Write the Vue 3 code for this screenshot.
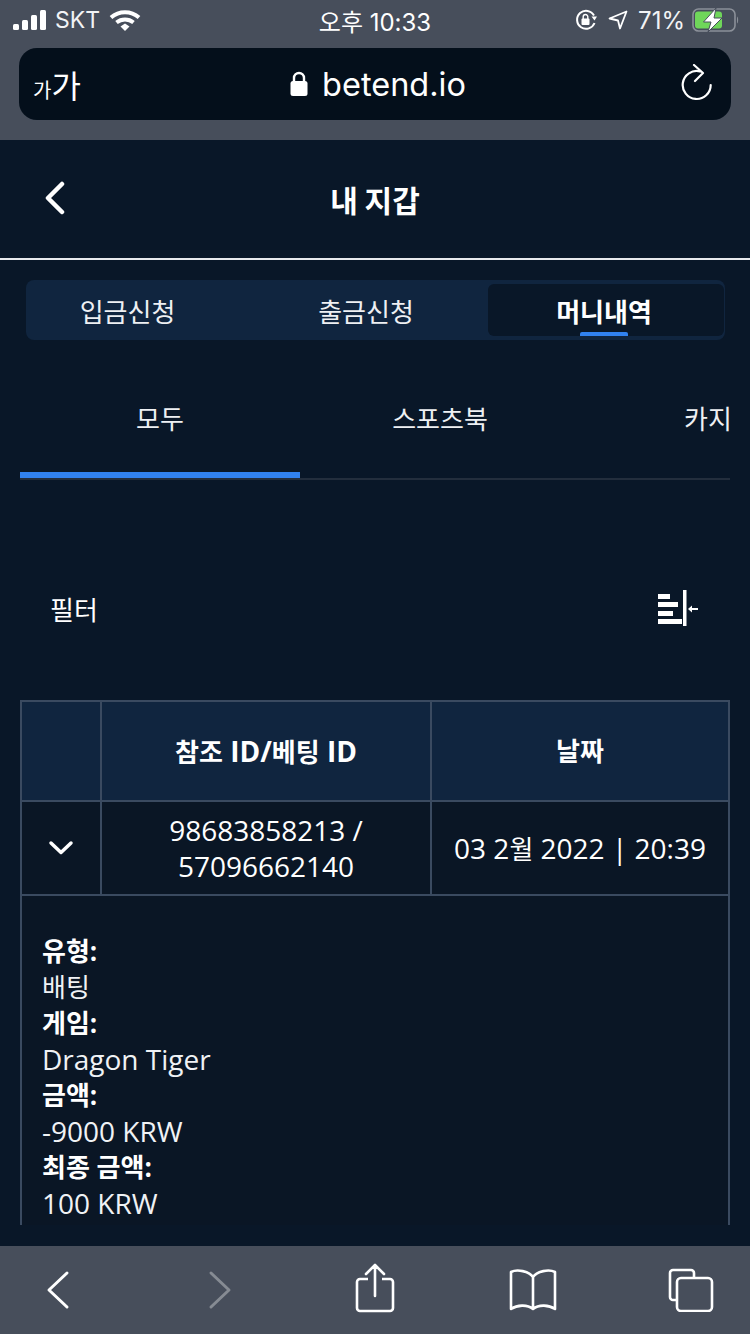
<template>
  <div class="page">
    <div class="browser-top">
      <div class="status">
        <div class="status-side">
          <svg class="signal" width="36" height="22" viewBox="0 0 36 22">
            <rect v-for="(bar, i) in signalBars" :key="i" :x="bar.x" :y="bar.y" width="6" :height="bar.h" rx="1.5" fill="#fff" />
          </svg>
          <span class="carrier">SKT</span>
          <svg class="wifi" width="32" height="24" viewBox="0 0 32 24">
            <path d="M2 9.500C10 2.500 22 2.500 30 9.500" fill="none" stroke="#fff" stroke-width="4" />
            <path d="M7.500 14.500C12.500 10.500 19.500 10.500 24.500 14.500" fill="none" stroke="#fff" stroke-width="4" />
            <path d="M11.500 18.500 16 15.500 20.500 18.500 16 23Z" fill="#fff" />
          </svg>
        </div>
        <div class="clock">오후 10:33</div>
        <div class="status-side right">
          <svg width="22" height="22" viewBox="0 0 22 22">
            <path d="M19 6.500A9 9 0 1 0 19.500 14" fill="none" stroke="#fff" stroke-width="2" />
            <path d="M16.500 7.500 22 7.500 19.500 11.500Z" fill="#fff" />
            <rect x="6.500" y="9.500" width="8" height="6.500" rx="1" fill="#fff" />
            <path d="M8.200 10V7.800a2.300 2.300 0 0 1 4.600 0V10" fill="none" stroke="#fff" stroke-width="1.400" />
          </svg>
          <svg class="arrow" width="20" height="20" viewBox="0 0 20 20">
            <path d="M18.500 1.500 1.500 8.500 10 10.500 12 18.500Z" fill="none" stroke="#fff" stroke-width="1.800" stroke-linejoin="round" />
          </svg>
          <span class="battery-text">71%</span>
          <svg class="battery" width="48" height="24" viewBox="0 0 48 24">
            <rect x="1" y="1" width="42" height="22" rx="5.500" fill="none" stroke="#8b9099" stroke-width="1.600" />
            <path d="M45 8.500c1.500.5 1.500 6.500 0 7Z" fill="#8b9099" />
            <rect x="3" y="3.500" width="27" height="17" rx="3" fill="#6fd65a" />
            <path d="M24 0 11.500 14H19L16 24 30 10H22Z" fill="#fff" stroke="#474e5b" stroke-width="1" />
          </svg>
        </div>
      </div>
      <div class="url-bar">
        <span class="aa"><small>가</small>가</span>
        <div class="address">
          <svg width="18" height="26" viewBox="0 0 18 26">
            <path d="M4 11V7a5 5 0 0 1 10 0v4" fill="none" stroke="#fff" stroke-width="2.400" />
            <rect x="0.500" y="10" width="17" height="15" rx="2.500" fill="#fff" />
          </svg>
          <span>betend.io</span>
        </div>
        <svg class="reload" width="32" height="38" viewBox="0 0 32 38">
          <path d="M19 7.400A14 14 0 1 0 29.700 21" fill="none" stroke="#fff" stroke-width="2.200" stroke-linecap="round" />
          <path d="M13 1 22 9 14 17" fill="none" stroke="#fff" stroke-width="2.200" stroke-linecap="round" stroke-linejoin="round" />
        </svg>
      </div>
    </div>

    <div class="content">
      <header class="nav">
        <svg class="nav-back" width="22" height="34" viewBox="0 0 22 34">
          <path d="M18 3 4 17 18 31" fill="none" stroke="#fff" stroke-width="4.500" stroke-linecap="round" stroke-linejoin="round" />
        </svg>
        <h1>내 지갑</h1>
      </header>

      <div class="segment">
        <div v-for="tab in walletTabs" :key="tab" class="segment-item" :class="{ active: tab === '머니내역' }">{{ tab }}</div>
      </div>

      <div class="tabs">
        <div v-for="(tab, i) in gameTabs" :key="tab" class="tab" :class="{ active: i === 0 }">{{ tab }}</div>
      </div>

      <div class="filter">
        <span>필터</span>
        <svg width="40" height="36" viewBox="0 0 40 36">
          <g fill="#fff">
            <rect x="0" y="4" width="12" height="5" />
            <rect x="0" y="12" width="20" height="5" />
            <rect x="0" y="21" width="15" height="5" />
            <rect x="0" y="29" width="24" height="5" />
            <rect x="25" y="0" width="3.500" height="36" />
            <rect x="33" y="18" width="7" height="2" />
            <path d="M30 19 34 15.500V22.500Z" />
          </g>
        </svg>
      </div>

      <div class="table">
        <div class="row head">
          <div class="cell c1"></div>
          <div class="cell c2"><span><span class="ko">참조</span> ID/<span class="ko">베팅</span> ID</span></div>
          <div class="cell c3"><span class="ko">날짜</span></div>
        </div>
        <div class="row body">
          <div class="cell c1">
            <svg width="26" height="16" viewBox="0 0 26 16">
              <path d="M3 3 13 12.500 23 3" fill="none" stroke="#fff" stroke-width="3.500" stroke-linecap="round" stroke-linejoin="round" />
            </svg>
          </div>
          <div class="cell c2">98683858213 /<br />57096662140</div>
          <div class="cell c3"><span>03 2<span class="ko">월</span> 2022 | 20:39</span></div>
        </div>
        <div class="details">
          <template v-for="item in details" :key="item.label">
            <b>{{ item.label }}</b>
            <span :class="{ ko: item.ko }">{{ item.value }}</span>
          </template>
        </div>
      </div>
    </div>

    <footer class="toolbar">
      <svg width="28" height="40" viewBox="0 0 28 40">
        <path d="M22 3 4 20 22 37" fill="none" stroke="#fff" stroke-width="3" stroke-linecap="round" stroke-linejoin="round" />
      </svg>
      <svg class="forward" width="28" height="40" viewBox="0 0 28 40">
        <path d="M6 3 24 20 6 37" fill="none" stroke="#868b93" stroke-width="3" stroke-linecap="round" stroke-linejoin="round" />
      </svg>
      <svg class="share" width="40" height="50" viewBox="0 0 40 50">
        <path d="M13 16H5a3 3 0 0 0-3 3v26a3 3 0 0 0 3 3h30a3 3 0 0 0 3-3V19a3 3 0 0 0-3-3h-8" fill="none" stroke="#fff" stroke-width="2.600" />
        <path d="M20 33V3M11 11l9-9 9 9" fill="none" stroke="#fff" stroke-width="2.600" stroke-linecap="round" stroke-linejoin="round" />
      </svg>
      <svg class="book" width="48" height="42" viewBox="0 0 48 42">
        <path d="M24 8C20 2 8 0 2 3V40C8 36 18 35 24 40C30 35 40 36 46 40V3C40 0 28 2 24 8ZM24 8V39" fill="none" stroke="#fff" stroke-width="2.600" stroke-linejoin="round" />
      </svg>
      <svg class="pages" width="46" height="44" viewBox="0 0 46 44">
        <path d="M8 32H5a3 3 0 0 1-3-3V5a3 3 0 0 1 3-3h18a3 3 0 0 1 3 3v5" fill="none" stroke="#fff" stroke-width="2.600" />
        <rect x="9" y="10" width="35" height="33" rx="4" fill="none" stroke="#fff" stroke-width="2.600" />
      </svg>
    </footer>
  </div>
</template>

<script setup>
const signalBars = [
  { x: 0, y: 15, h: 6 },
  { x: 9, y: 11, h: 10 },
  { x: 18, y: 6, h: 15 },
  { x: 27, y: 1, h: 20 },
]

const walletTabs = ['입금신청', '출금신청', '머니내역']
const gameTabs = ['모두', '스포츠북', '카지노']

const details = [
  { label: '유형:', value: '배팅', ko: true },
  { label: '게임:', value: 'Dragon Tiger' },
  { label: '금액:', value: '-9000 KRW' },
  { label: '최종 금액:', value: '100 KRW' },
]
</script>

<style scoped>
.page {
  width: 750px;
  height: 1334px;
  display: flex;
  flex-direction: column;
  overflow: hidden;
  background: #091728;
  color: #fff;
  font-family: "Open Sans", "Noto Sans CJK KR", sans-serif;
}

.browser-top {
  height: 140px;
  flex: none;
  background: #474e5b;
  padding: 0 19px;
  box-sizing: border-box;
}

.status {
  height: 40px;
  margin: 0 -6px 8px;
  display: flex;
  align-items: center;
  justify-content: space-between;
  position: relative;
  font-family: Inter, "Noto Sans CJK KR", sans-serif;
  font-size: 24px;
}

.status-side {
  display: flex;
  align-items: center;
  gap: 6px;
  color: #f2f3f5;
}

.status-side.right {
  gap: 9px;
}

.wifi {
  margin-left: 3px;
}

.carrier {
  font-size: 23px;
}

.arrow {
  margin-left: 2px;
}

.battery-text {
  margin-left: 1px;
}

.battery {
  margin-left: -2px;
  margin-right: -3px;
}

.clock {
  position: absolute;
  left: 0;
  right: 0;
  text-align: center;
  pointer-events: none;
}

.url-bar {
  height: 72px;
  border-radius: 18px;
  background: #040f1b;
  display: flex;
  align-items: center;
  justify-content: space-between;
  position: relative;
  padding: 0 18px 0 14px;
}

.aa {
  font-family: "Noto Sans CJK KR", sans-serif;
  font-size: 32px;
  line-height: 1;
}

.aa small {
  font-size: 20px;
}

.address {
  position: absolute;
  left: 6px;
  right: 0;
  display: flex;
  align-items: center;
  justify-content: center;
  gap: 14px;
  font-family: Inter, sans-serif;
  font-size: 32.5px;
  pointer-events: none;
}

.reload {
  margin-bottom: 2px;
}

.content {
  flex: 1;
  min-height: 0;
  overflow: hidden;
  display: flex;
  flex-direction: column;
}

.nav {
  height: 120px;
  flex: none;
  box-sizing: border-box;
  border-bottom: 2px solid #e8eaed;
  display: flex;
  align-items: center;
  justify-content: center;
  position: relative;
}

.nav-back {
  position: absolute;
  left: 44px;
  top: 41px;
}

.nav h1 {
  margin: 0;
  font-size: 30px;
  font-weight: 700;
  font-family: "Noto Sans CJK KR", sans-serif;
}

.segment {
  height: 60px;
  margin: 20px 25px 0 26px;
  padding: 4px 1px;
  box-sizing: border-box;
  background: #10253f;
  border-radius: 8px;
  display: flex;
  font-family: "Noto Sans CJK KR", sans-serif;
  font-size: 26px;
  flex: none;
}

.segment-item {
  flex: 1;
  display: flex;
  align-items: center;
  justify-content: center;
  border-radius: 6px;
  position: relative;
  box-sizing: border-box;
  color: #eef0f3;
}

.segment-item:nth-child(1) {
  flex: 0 0 204px;
  padding-right: 3px;
}

.segment-item:nth-child(2) {
  flex: 0 0 257px;
  padding-left: 13px;
}

.segment-item.active {
  background: #091728;
  color: #fff;
  font-weight: 700;
  padding-right: 4px;
}

.segment-item.active::after {
  content: "";
  position: absolute;
  left: 92px;
  bottom: 0;
  width: 48px;
  height: 4px;
  border-radius: 2px 2px 0 0;
  background: #3182f0;
}

.tabs {
  height: 140px;
  flex: none;
  margin: 0 20px;
  display: flex;
  overflow: hidden;
  box-sizing: border-box;
  border-bottom: 2px solid #232e3d;
  font-family: "Noto Sans CJK KR", sans-serif;
  font-size: 26px;
}

.tab {
  flex: 0 0 280px;
  padding-top: 60px;
  box-sizing: border-box;
  height: 138px;
  text-align: center;
  line-height: 36px;
  color: #eef0f3;
}

.tab.active {
  border-bottom: 6px solid #3182f0;
}

.filter {
  height: 220px;
  flex: none;
  box-sizing: border-box;
  padding: 36px 52px 0 50px;
  display: flex;
  align-items: center;
  justify-content: space-between;
  font-family: "Noto Sans CJK KR", sans-serif;
  font-size: 26px;
}

.table {
  margin: 0 20px 21px;
  flex: 1;
  min-height: 0;
  overflow: hidden;
  box-sizing: border-box;
  border: solid #3a4a60;
  border-width: 2px 2px 0;
  background: #0a1625;
}

.row {
  display: flex;
  border-bottom: 2px solid #3a4a60;
  box-sizing: border-box;
}

.row.head {
  height: 100px;
  background: #10253f;
  font-weight: 700;
}

.row.body {
  height: 94px;
}

.cell {
  display: flex;
  align-items: center;
  justify-content: center;
  text-align: center;
  font-size: 28px;
  line-height: 36px;
  box-sizing: border-box;
}

.c1 {
  flex: 0 0 80px;
  border-right: 2px solid #3a4a60;
}

.c2 {
  flex: 0 0 330px;
  border-right: 2px solid #3a4a60;
}

.c3 {
  flex: 1;
}

.ko {
  font-size: 26px;
}

.details {
  display: flex;
  flex-direction: column;
  align-items: flex-start;
  padding: 37px 20px 0;
  font-size: 28px;
  line-height: 36px;
  color: #f0f2f5;
}

.details b {
  font-size: 26px;
  font-weight: 700;
  color: #fff;
}

.toolbar {
  height: 88px;
  flex: none;
  background: #474e5b;
  display: flex;
  align-items: center;
  padding-left: 45px;
  box-sizing: border-box;
}

.forward {
  margin-left: 132px;
}

.share {
  margin-left: 122px;
  margin-bottom: 4px;
}

.book {
  margin-left: 114px;
}

.pages {
  margin-left: 111px;
}
</style>

<style>
body {
  background: #091728;
}
</style>
